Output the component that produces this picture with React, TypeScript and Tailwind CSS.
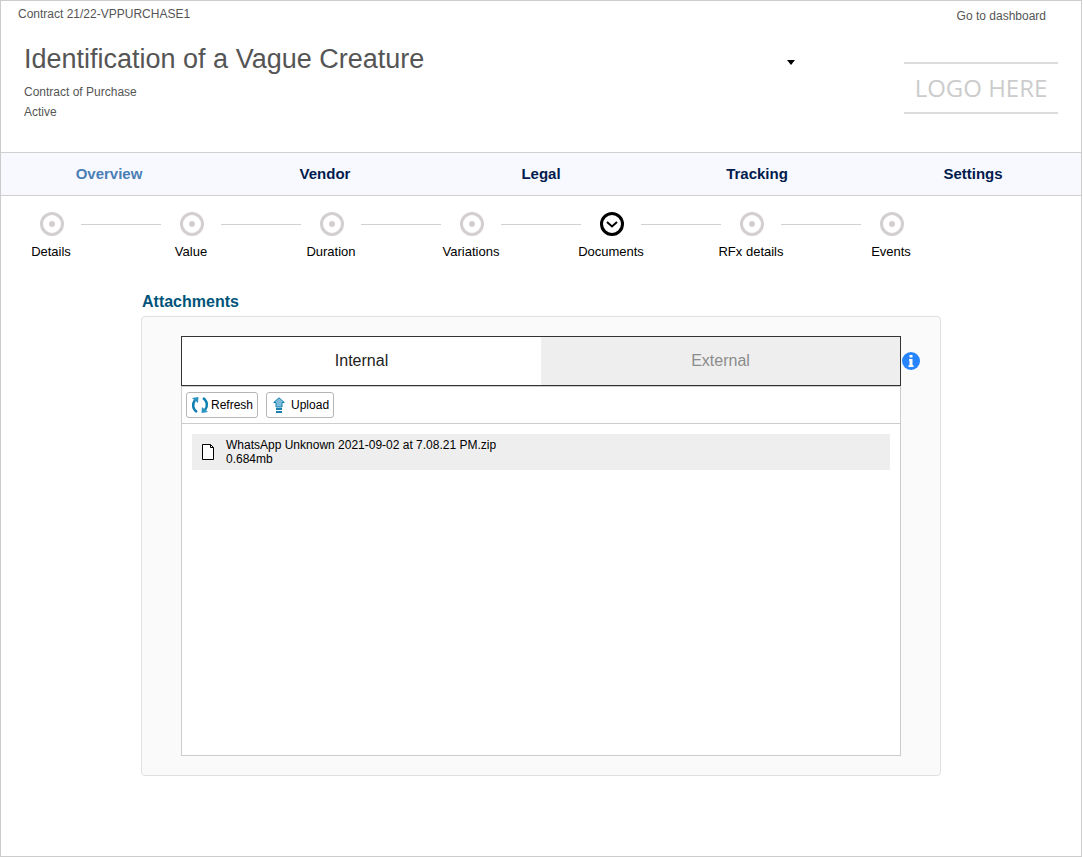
import { useState } from 'react';
import clsx from 'clsx';

const sections = ['Overview', 'Vendor', 'Legal', 'Tracking', 'Settings'];
const steps = ['Details', 'Value', 'Duration', 'Variations', 'Documents', 'RFx details', 'Events'];
const files = [{ name: 'WhatsApp Unknown 2021-09-02 at 7.08.21 PM.zip', size: '0.684mb' }];

function StepIcon({ active }: { active: boolean }) {
    return (
        <svg width="24" height="24" viewBox="0 0 24 24" fill="none" aria-hidden="true">
            <circle cx="12" cy="12" r="10.5" stroke={active ? '#000' : '#d3cfcf'} strokeWidth="3" />
            {active ? (
                <path d="M7 10l5 4.500 5-4.500" stroke="#000" strokeWidth="2" />
            ) : (
                <circle cx="12" cy="12" r="3" fill="#d3cfcf" />
            )}
        </svg>
    );
}

function RefreshIcon() {
    return (
        <svg width="18" height="18" viewBox="0 0 18 18" fill="none" aria-hidden="true">
            <path d="M6 16C1.500 13 1 8 4 4" stroke="#1080b2" strokeWidth="2.5" />
            <path d="M1 2L7.500 1 7 7z" fill="#2b93c0" />
            <path d="M12 2c4.500 3 5 8 2 12" stroke="#1080b2" strokeWidth="2.5" />
            <path d="M17 16l-6.500 1 .5-6z" fill="#2b93c0" />
        </svg>
    );
}

function UploadIcon() {
    return (
        <svg width="12" height="16" viewBox="0 0 12 16" aria-hidden="true">
            <path d="M6 .8L11.300 5.500H9v4.500H3V5.500H.7z" fill="#7dbbd8" stroke="#1680b2" />
            <path d="M3 11h6v2H3zM3 14h6v2H3z" fill="#1680b2" />
        </svg>
    );
}

function FileIcon() {
    return (
        <svg width="12" height="16" viewBox="0 0 12 16" aria-hidden="true">
            <path d="M.5.5h8l3 3v12H.5z" fill="#fff" stroke="#000" />
            <path d="M8.500.5v3h3" fill="none" stroke="#000" />
        </svg>
    );
}

function InfoIcon() {
    return (
        <svg width="18" height="18" viewBox="0 0 18 18" aria-hidden="true">
            <circle cx="9" cy="9" r="9" fill="#2684ff" />
            <path d="M7.500 3h3v2.500h-3zM7 7h3.500v6.200h1v1.800h-5v-1.800h1V8.800H7z" fill="#fff" />
        </svg>
    );
}

function Header() {
    return (
        <header className="flex items-start text-xs text-[#555]">
            <div className="flex-1 pt-1 pb-[30px] pl-[17px]">
                <p className="leading-[18px]">Contract 21/22-VPPURCHASE1</p>
                <div className="pl-1.5 pt-[18px]">
                    <h1 className="text-[27px] leading-9">Identification of a Vague Creature</h1>
                    <p className="pt-[5px] leading-5">Contract of Purchase</p>
                    <p className="leading-5">Active</p>
                </div>
            </div>
            <button type="button" aria-label="More actions" className="mt-[59px] mr-[109px]">
                <svg width="8" height="5" viewBox="0 0 8 5" className="block" aria-hidden="true">
                    <path d="M0 0h8L4 5z" fill="#000" />
                </svg>
            </button>
            <div className="flex flex-col items-end pr-[23px]">
                <a href="#dashboard" className="pt-1.5 pr-3 leading-[18px]">Go to dashboard</a>
                <div className="mt-[37px] w-[154px] border-y-2 border-[#dcdcdc] text-center font-['Open_Sans',sans-serif] text-2xl leading-12 text-[#ccc]">
                    LOGO HERE
                </div>
            </div>
        </header>
    );
}

function AttachmentsPanel() {
    const [tab, setTab] = useState('Internal');

    return (
        <section className="mx-auto max-w-[800px]">
            <h2 className="pl-px text-base font-bold leading-6 text-[#00547a]">Attachments</h2>
            <div className="mt-0.5 rounded border border-[#e0e0e0] bg-[#fafafa] px-[39px] py-[19px]">
                <div className="relative">
                    <div className="grid h-[50px] grid-cols-2 border border-[#333]">
                        {['Internal', 'External'].map((name) => (
                            <button
                                key={name}
                                type="button"
                                onClick={() => setTab(name)}
                                className={clsx('text-base', tab === name ? 'bg-white text-[#222]' : 'bg-[#eee] text-[#8c8c8c]')}
                            >
                                {name}
                            </button>
                        ))}
                    </div>
                    <button type="button" aria-label="Information" className="absolute left-full top-4 ml-px">
                        <InfoIcon />
                    </button>
                </div>
                <div className="min-h-[370px] border border-[#ccc] bg-white">
                    <div className="flex gap-2 border-b border-[#ccc] px-1 py-[5px] text-xs text-black">
                        <button type="button" className="flex h-[26px] items-center gap-0.5 rounded-[3px] border border-[#b5b5b5] px-1">
                            <RefreshIcon />
                            Refresh
                        </button>
                        <button type="button" className="flex h-[26px] items-center gap-1.5 rounded-[3px] border border-[#b5b5b5] pr-1 pl-1.5">
                            <UploadIcon />
                            Upload
                        </button>
                    </div>
                    <ul className="p-2.5">
                        {files.map((file) => (
                            <li key={file.name} className="flex items-center gap-3 bg-[#eee] px-2.5 py-1 text-xs leading-[14px] text-black">
                                <FileIcon />
                                <div>
                                    <p>{file.name}</p>
                                    <p>{file.size}</p>
                                </div>
                            </li>
                        ))}
                    </ul>
                </div>
            </div>
        </section>
    );
}

export default function App() {
    return (
        <div className="mr-px min-h-screen border border-[#ccc] bg-white font-['Liberation_Sans',Arial,sans-serif]">
            <Header />
            <nav className="grid grid-cols-5 border-y border-[#d0d0d0] bg-[#f8f9ff] text-center text-[15px] font-bold leading-[42px] text-[#001b4d]">
                {sections.map((name) => (
                    <a key={name} href={`#${name.toLowerCase()}`} className={clsx(name === 'Overview' && 'text-[#4a7fb5]')}>
                        {name}
                    </a>
                ))}
            </nav>
            <ol className="flex px-5 pt-4 pb-[29px] text-[13px] leading-[18px] text-black">
                {steps.map((name, i) => (
                    <li key={name} className="flex items-start">
                        {i > 0 && <span className="mt-3 h-px w-20 bg-[#d0d0d0]" />}
                        <a href={`#${i + 1}`} className="flex w-15 flex-col items-center gap-[7px] whitespace-nowrap">
                            <span className="pl-0.5">
                                <StepIcon active={name === 'Documents'} />
                            </span>
                            {name}
                        </a>
                    </li>
                ))}
            </ol>
            <AttachmentsPanel />
        </div>
    );
}
